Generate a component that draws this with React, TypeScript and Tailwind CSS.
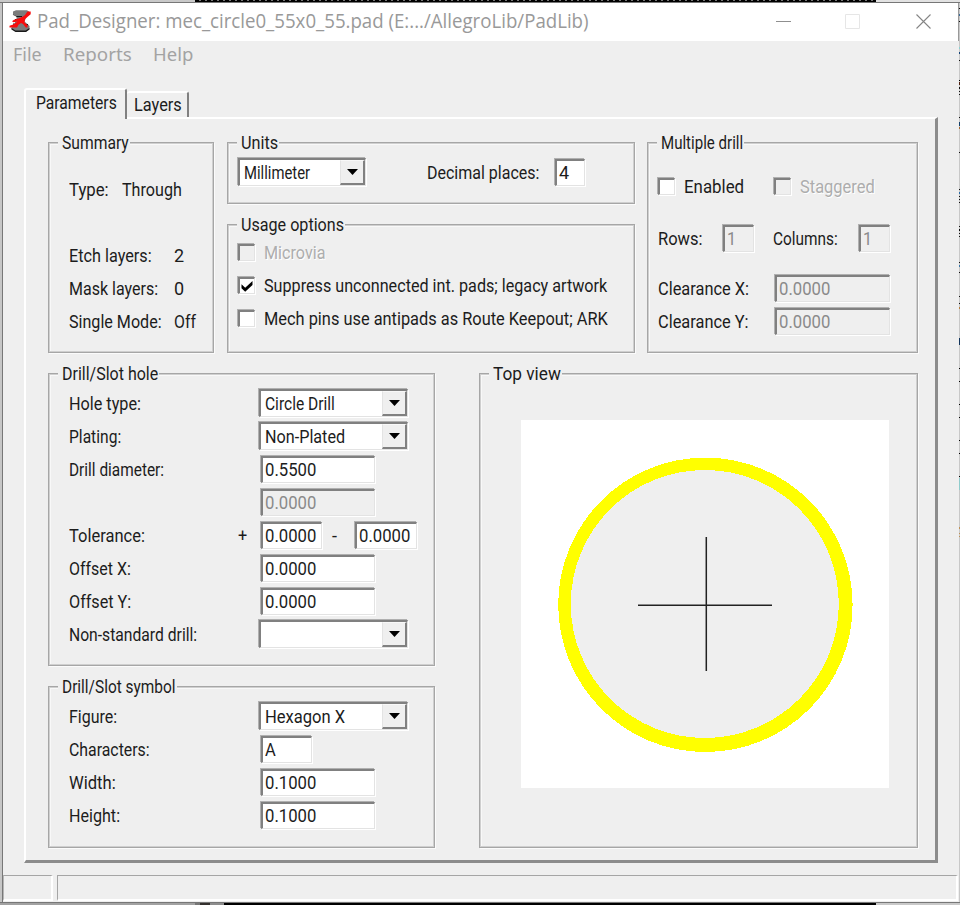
import { useLayoutEffect, useRef, useState } from "react";
import type { ReactNode } from "react";

/* A line of text condensed or stretched horizontally to a known width. */
function T({ w, children, className = "" }: { w: number; children: ReactNode; className?: string }) {
  const ref = useRef<HTMLSpanElement>(null);
  const [scale, setScale] = useState(1);
  useLayoutEffect(() => {
    const natural = ref.current?.offsetWidth;
    if (natural) setScale((w + 1) / natural);
  }, [w]);
  return (
    <span className={`block shrink-0 whitespace-nowrap ${className}`} style={{ width: w + 1 }}>
      <span ref={ref} className="inline-block origin-left align-top" style={{ transform: `scaleX(${scale})` }}>
        {children}
      </span>
    </span>
  );
}

function Group({ title, tw, className, children }: { title: string; tw: number; className: string; children?: ReactNode }) {
  return (
    <section
      className={`relative shrink-0 border-2 border-[#cfcfcf] shadow-[1px_1px_0_#fbfbfb,inset_1px_1px_0_#f8f8f8] outline-1 -outline-offset-1 outline-[#a6a6a6] outline-solid ${className}`}
    >
      <h2 className="absolute -top-[13px] left-[8px] z-10 bg-[#efefef] pr-px pl-[4px] leading-6">
        <T w={tw}>{title}</T>
      </h2>
      {children}
    </section>
  );
}

const sunken =
  "border-t-2 border-l-2 border-r border-b border-t-[#808080] border-l-[#808080] border-r-[#e3e3e3] border-b-[#e3e3e3] shadow-[-1px_-1px_0_#b0b0b0,1px_1px_0_#fff]";

function Field({ value, vw, className, disabled = false }: { value: string; vw: number; className: string; disabled?: boolean }) {
  return (
    <div
      className={`m-px flex h-[27px] shrink-0 items-center pl-[2px] ${sunken} ${disabled ? "bg-[#efefef] text-[#8a8a8a]" : "bg-white"} ${className}`}
    >
      <T w={vw}>{value}</T>
    </div>
  );
}

function Combo({ value, vw, className }: { value?: string; vw?: number; className: string }) {
  return (
    <div className={`mx-px mt-0 mb-[2px] flex h-[28px] shrink-0 bg-white ${sunken} ${className}`}>
      <div className="flex flex-1 items-center pt-px pl-[4px]">{value ? <T w={vw ?? 0}>{value}</T> : null}</div>
      <div className="flex w-[25px] items-center justify-center border-t border-r-2 border-b-2 border-l border-t-[#f8f8f8] border-r-[#808080] border-b-[#808080] border-l-[#e3e3e3] bg-[#efefef] pt-px">
        <svg width="11" height="6" viewBox="0 0 11 6">
          <path d="M0 0h11L5.500 6z" fill="#000" />
        </svg>
      </div>
    </div>
  );
}

function Check({ label, lw, checked = false, disabled = false }: { label: string; lw: number; checked?: boolean; disabled?: boolean }) {
  return (
    <div className={`flex h-[33px] items-center gap-[8px] ${disabled ? "text-[#adadad] [text-shadow:1px_1px_0_#fff]" : ""}`}>
      <div className={`m-px flex size-[17px] items-center justify-center ${sunken} ${disabled ? "bg-[#efefef]" : "bg-white"}`}>
        {checked && (
          <svg width="12" height="11" viewBox="0 0 12 11">
            <path d="M.5 3.200v4L4.200 10.800 11.500 4V0L4.200 6.800z" fill="#000" />
          </svg>
        )}
      </div>
      <T w={lw}>{label}</T>
    </div>
  );
}

function Row({ label, lw, children }: { label?: string; lw?: number; children?: ReactNode }) {
  return (
    <div className="flex h-[33px] items-center">
      <div className="w-[189px] shrink-0">{label ? <T w={lw ?? 0}>{label}</T> : null}</div>
      {children}
    </div>
  );
}

function Stat({ label, lw, value, vw, wide = true }: { label: string; lw: number; value: string; vw: number; wide?: boolean }) {
  return (
    <div className="flex h-[33px] items-center">
      <div className={wide ? "w-[105px]" : "w-[53px]"}>
        <T w={lw}>{label}</T>
      </div>
      <T w={vw}>{value}</T>
    </div>
  );
}

function AppIcon() {
  return (
    <svg width="23" height="23" viewBox="0 0 23 23">
      <path d="M4 1.500 7 .3h11l2 1.200v2.500L16.500 6v3l-1 2.500L19 14.500l1.500 1.500v3L17 21.500H7L2.500 19v-3L6 14.500v-3L7.500 9V6.500L4 5z" fill="#7b7b7b" />
      <path d="M3 4l4 2h6v1H8zM2.500 18l4 2.500h10l4-2.500v1.500L17 22H6.500l-4-2.500zM6 9h3v1.500H6zM4 13.500h5v1.200H4zM16 14h3v1.200h-3z" fill="#1a1a1a" />
      <path
        d="M18.500 1.500h3.200v2.800L19 6.500l-3 2.700-.5 3.300 3 2.500v2.500h-1.700L14 14l-2-1-2.500 1.800L8 17.500H.5v-1.800L5 14.300l3.500-2.800-4 .8-1.500-1 2-1.600 4.500-1.200L14 6.500l2-1.500z"
        fill="#f80c0c"
      />
    </svg>
  );
}

const specks: [number, number, string][] = [
  [8, 1, "#111"], [14, 2, "#3d6d99"], [21, 1, "#111"], [47, 2, "#8cd0d0"], [52, 2, "#15457a"], [60, 1, "#111"],
  [80, 1, "#000"], [82, 3, "#502010"], [87, 2, "#111"], [91, 1, "#111"], [94, 1, "#111"], [117, 1, "#111"],
  [122, 4, "#14406b"], [127, 2, "#a66a32"], [152, 1, "#111"], [189, 1, "#111"], [192, 2, "#2a6ca8"], [196, 1, "#111"],
  [199, 1, "#111"], [202, 1, "#111"], [226, 1, "#111"], [229, 2, "#111"], [233, 1, "#111"], [236, 1, "#111"],
  [262, 1, "#111"], [265, 2, "#3c77a8"], [272, 1, "#111"], [296, 1, "#111"], [303, 1, "#111"], [307, 2, "#b88040"],
  [338, 7, "#12345c"], [368, 1, "#000"], [381, 1, "#000"], [404, 1, "#000"], [417, 1, "#000"], [440, 1, "#000"],
  [453, 1, "#000"], [476, 1, "#000"], [478, 12, "#8fcccc"], [527, 2, "#c09055"], [533, 1, "#c09055"], [536, 1, "#c09055"],
];

export default function App() {
  return (
    <div className="flex h-[905px] w-[960px] flex-col overflow-hidden bg-[#cbcbcb] font-['Roboto','Liberation_Sans',sans-serif] text-[18px] leading-6 text-[#1c1c1c]">
      <div className="flex h-[3px] shrink-0 flex-col">
        <div className="flex h-[2px]">
          <div className="w-[195px] bg-[#c9c9c9]" />
          <div className="w-[681px] bg-black bg-[repeating-linear-gradient(90deg,#000_0_4px,#777_4px_6px)] bg-[length:100%_1px] bg-no-repeat" />
          <div className="flex-1 bg-[#e2e2e2]" />
        </div>
        <div className="h-px bg-[#777]" />
      </div>

      <div className="flex h-[899px] shrink-0">
        <div className="w-[2px] bg-[#c6c6c6]" />
        <div className="w-px bg-[#777]" />

        <main className="flex w-[955px] shrink-0 flex-col bg-[#efefef]">
          <header className="flex h-[38px] shrink-0 items-center bg-white pb-px pl-[6px]">
            <AppIcon />
            <div className="ml-[5px] w-[736px] shrink-0 pb-px font-['Open_Sans','Noto_Sans',sans-serif] text-[19.5px] text-[#999]">
              <T w={551}>Pad_Designer: mec_circle0_55x0_55.pad (E:.../AllegroLib/PadLib)</T>
            </div>
            <svg className="ml-[3px]" width="160" height="16" viewBox="0 0 160 16" fill="none">
              <path d="M0 7.500h15" stroke="#8f8f8f" />
              <path d="M69.500.5h14v14h-14z" stroke="#e6e6e6" />
              <path d="M140.500.5l14 14M154.500.5l-14 14" stroke="#858585" strokeWidth="1.100" />
            </svg>
          </header>

          <nav className="flex h-[27px] shrink-0 items-center pb-[2px] pl-[10px] font-['Noto_Sans','Open_Sans',sans-serif] text-[18.5px] font-normal text-[#a3a3a3]">
            <T w={28} className="mr-[21px]">File</T>
            <T w={68} className="mr-[21px]">Reports</T>
            <T w={39}>Help</T>
          </nav>

          <div className="z-10 mt-[20px] -mb-[2px] ml-[21px] flex h-[31px] shrink-0 items-end">
            <div className="flex h-[31px] w-[103px] items-center rounded-t-[3px] border-t-2 border-r-[2px] border-l-2 border-t-white border-r-[#808080] border-l-white bg-[#efefef] pb-[4px] pl-[10px]">
              <T w={80}>Parameters</T>
            </div>
            <div className="mb-[2px] flex h-[26px] w-[62px] items-center rounded-t-[3px] border-t-2 border-r-[2px] border-t-white border-r-[#808080] pl-[7px]">
              <T w={47}>Layers</T>
            </div>
          </div>

          <div className="ml-[21px] h-[746px] w-[914px] shrink-0 border-t-2 border-r-[3px] border-b-[3px] border-l-2 border-t-white border-r-[#8c8c8c] border-b-[#8c8c8c] border-l-white pt-[23px] pl-[22px]">
            <div className="flex h-[211px]">
              <Group title="Summary" tw={66} className="w-[166px] pt-[29px] pl-[19px]">
                <Stat label="Type:" lw={39} value="Through" vw={59} wide={false} />
                <div className="h-[33px]" />
                <Stat label="Etch layers:" lw={82} value="2" vw={9} />
                <Stat label="Mask layers:" lw={88} value="0" vw={9} />
                <Stat label="Single Mode:" lw={92} value="Off" vw={21} />
              </Group>

              <div className="ml-[13px] flex flex-col gap-[20px]">
                <Group title="Units" tw={36} className="h-[62px] w-[408px] pt-[12px] pl-[8px]">
                  <div className="flex h-[33px] items-center">
                    <Combo value="Millimeter" vw={65} className="w-[128px]" />
                    <div className="ml-[60px] w-[127px]">
                      <T w={111}>Decimal places:</T>
                    </div>
                    <Field value="4" vw={9} className="w-[30px]" />
                  </div>
                </Group>
                <Group title="Usage options" tw={102} className="h-[129px] w-[408px] pt-[10px] pl-[8px]">
                  <Check label="Microvia" lw={60} disabled />
                  <Check label="Suppress unconnected int. pads; legacy artwork" lw={342} checked />
                  <Check label="Mech pins use antipads as Route Keepout; ARK" lw={343} />
                </Group>
              </div>

              <Group title="Multiple drill" tw={81} className="ml-[12px] w-[271px] pt-[26px] pl-[8px]">
                <div className="flex">
                  <div className="w-[116px]">
                    <Check label="Enabled" lw={59} />
                  </div>
                  <Check label="Staggered" lw={74} disabled />
                </div>
                <div className="mt-[19px] flex h-[33px] items-center pl-px">
                  <div className="w-[64px]">
                    <T w={44}>Rows:</T>
                  </div>
                  <Field value="1" vw={8} className="w-[31px]" disabled />
                  <div className="ml-[18px] w-[85px]">
                    <T w={64}>Columns:</T>
                  </div>
                  <Field value="1" vw={8} className="w-[31px]" disabled />
                </div>
                <div className="mt-[17px] flex h-[33px] items-center pl-px">
                  <div className="w-[116px]">
                    <T w={90}>Clearance X:</T>
                  </div>
                  <Field value="0.0000" vw={50} className="w-[115px]" disabled />
                </div>
                <div className="flex h-[33px] items-center pl-px">
                  <div className="w-[116px]">
                    <T w={90}>Clearance Y:</T>
                  </div>
                  <Field value="0.0000" vw={50} className="w-[115px]" disabled />
                </div>
              </Group>
            </div>

            <div className="mt-[20px] flex gap-[44px]">
              <div className="flex flex-col gap-[20px]">
                <Group title="Drill/Slot hole" tw={95} className="h-[293px] w-[387px] pt-[12px] pl-[19px]">
                  <Row label="Hole type:" lw={71}>
                    <Combo value="Circle Drill" vw={69} className="w-[149px]" />
                  </Row>
                  <Row label="Plating:" lw={51}>
                    <Combo value="Non-Plated" vw={79} className="w-[149px]" />
                  </Row>
                  <Row label="Drill diameter:" lw={94}>
                    <Field value="0.5500" vw={50} className="ml-[3px] w-[114px]" />
                  </Row>
                  <Row>
                    <Field value="0.0000" vw={50} className="ml-[3px] w-[114px]" disabled />
                  </Row>
                  <div className="flex h-[33px] items-center">
                    <div className="w-[169px]">
                      <T w={75}>Tolerance:</T>
                    </div>
                    <div className="w-[22px]">
                      <T w={8}>+</T>
                    </div>
                    <Field value="0.0000" vw={50} className="w-[61px]" />
                    <div className="ml-[9px] w-[22px]">
                      <T w={4}>-</T>
                    </div>
                    <Field value="0.0000" vw={50} className="w-[62px]" />
                  </div>
                  <Row label="Offset X:" lw={61}>
                    <Field value="0.0000" vw={50} className="ml-[3px] w-[114px]" />
                  </Row>
                  <Row label="Offset Y:" lw={61}>
                    <Field value="0.0000" vw={50} className="ml-[3px] w-[114px]" />
                  </Row>
                  <Row label="Non-standard drill:" lw={127}>
                    <Combo className="w-[149px]" />
                  </Row>
                </Group>

                <Group title="Drill/Slot symbol" tw={113} className="h-[162px] w-[387px] pt-[12px] pl-[19px]">
                  <Row label="Figure:" lw={47}>
                    <Combo value="Hexagon X" vw={79} className="w-[149px]" />
                  </Row>
                  <Row label="Characters:" lw={80}>
                    <Field value="A" vw={10} className="ml-[3px] w-[51px]" />
                  </Row>
                  <Row label="Width:" lw={46}>
                    <Field value="0.1000" vw={50} className="ml-[3px] w-[114px]" />
                  </Row>
                  <Row label="Height:" lw={50}>
                    <Field value="0.1000" vw={50} className="ml-[3px] w-[114px]" />
                  </Row>
                </Group>
              </div>

              <Group title="Top view" tw={67} className="h-[475px] w-[439px] pt-[45px] pl-[40px]">
                <svg className="block bg-white" width="368" height="368" viewBox="0 0 368 368">
                  <circle cx="184.400" cy="184.800" r="147.200" fill="#ffff00" shapeRendering="crispEdges" />
                  <circle cx="183.800" cy="184" r="134" fill="#efefef" shapeRendering="crispEdges" />
                  <path d="M185.300 117v134M117 185.300h134" stroke="#222" strokeWidth="1.500" />
                </svg>
              </Group>
            </div>
          </div>

          <footer className="mt-[12px] flex h-[26px] shrink-0 gap-[4px]">
            <div className="w-[50px] border-t border-r-2 border-b-2 border-l border-t-[#a5a5a5] border-r-white border-b-white border-l-[#b5b5b5]" />
            <div className="flex-1 border-t border-r-2 border-b-2 border-l border-t-[#a5a5a5] border-r-white border-b-white border-l-[#a5a5a5]" />
          </footer>
        </main>

        <div className="flex w-px flex-col">
          <div className="h-[38px] bg-[#999]" />
          <div className="flex-1 bg-[#efefef]" />
        </div>
        <svg className="shrink-0 bg-[#c8c8c8]" width="1" height="899" viewBox="0 3 1 899">
          {specks.map(([y, h, fill]) => (
            <rect key={y} x="0" y={y} width="1" height={h} fill={fill} />
          ))}
        </svg>
      </div>

      <div className="flex h-[3px] shrink-0 flex-col">
        <div className="h-px bg-[#777]" />
        <div className="flex h-[2px]">
          <div className="w-[195px] bg-[#a2a2a2]" />
          <div className="w-[5px] bg-[#777]" />
          <div className="w-[10px] bg-[#33302e]" />
          <div className="w-[14px] bg-[#8d8d8d]" />
          <div className="w-[652px] bg-black" />
          <div className="flex-1 bg-[#c9c9c9]" />
        </div>
      </div>
    </div>
  );
}
